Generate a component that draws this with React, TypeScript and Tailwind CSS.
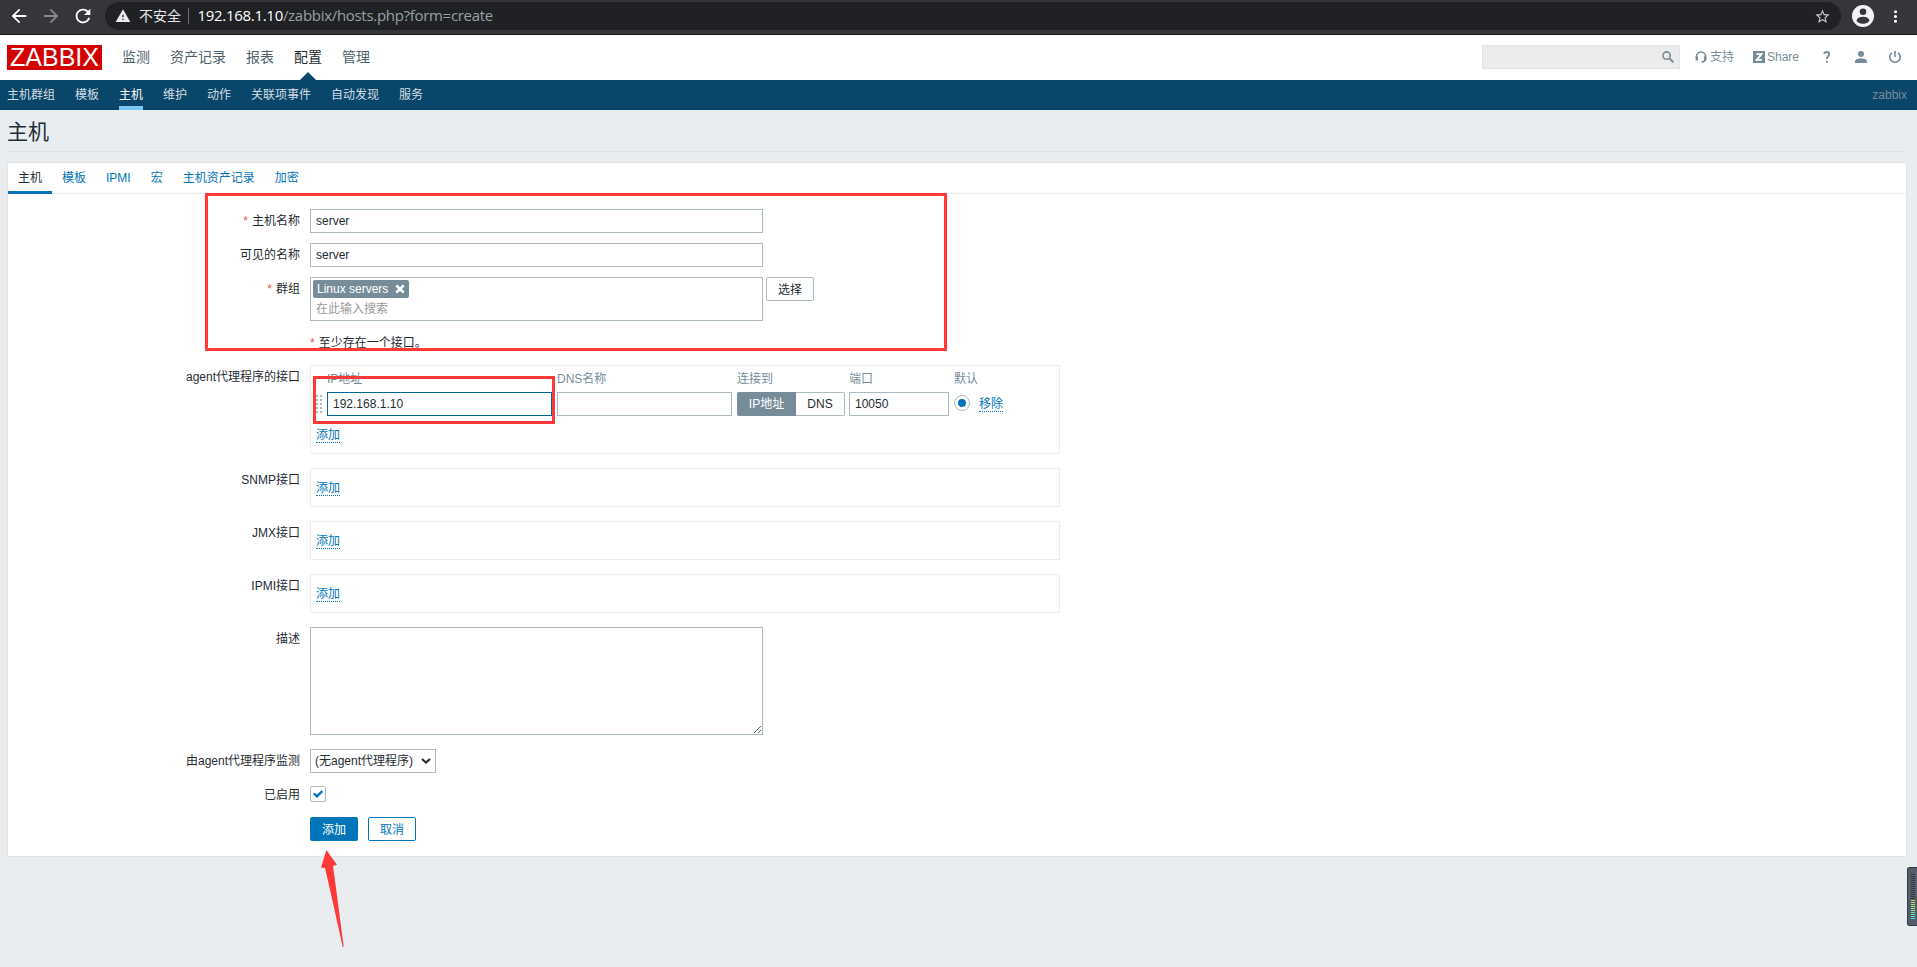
import type { ReactNode } from 'react'
import { MdArrowBack, MdArrowForward, MdMoreVert, MdRefresh, MdStarBorder, MdWarning } from 'react-icons/md'

const menu = ['监测', '资产记录', '报表', '配置', '管理']
const subMenu = ['主机群组', '模板', '主机', '维护', '动作', '关联项事件', '自动发现', '服务']
const tabs = ['主机', '模板', 'IPMI', '宏', '主机资产记录', '加密']
const offBars = Array.from({ length: 13 })
const onBars = ['#c9dc4e', '#bfe05a', '#aee468', '#9de676', '#8ce786', '#7be896', '#6be8a6', '#5be6b4', '#50e4c2', '#49e0cf']

function BrowserBar() {
  return (
    <div className="flex h-[35px] items-start border-b border-[#1b1c1f] bg-[#35363a] pt-0.5 text-white">
      <div className="flex h-7 w-[105px] items-center pl-2">
        <MdArrowBack className="size-[22px]" />
        <MdArrowForward className="ml-2.5 size-[22px] text-[#87888b]" />
        <MdRefresh className="ml-2.5 size-[22px]" />
      </div>
      <div className="flex h-7 w-[1736px] items-center rounded-full bg-[#202124] pr-2.5 pl-2.5">
        <MdWarning className="size-4 text-[#e8eaed]" />
        <span className="ml-2 text-[14px] text-[#e8eaed]">不安全</span>
        <span className="mx-[7px] h-4 w-px bg-[#6b6c6f]" />
        <span className="ml-[1.5px] pb-px font-['Open_Sans',sans-serif] text-[15px] tracking-[-0.3px] text-[#9aa0a6]">
          <span className="text-white">192.168.1.10</span>
          /zabbix/hosts.php?form=create
        </span>
        <MdStarBorder className="ml-auto size-[17px] text-[#c8c9cc]" />
      </div>
      <svg viewBox="0 0 22 22" className="mt-[3px] ml-[11px] size-[22px]">
        <circle cx="11" cy="11" r="11" fill="#f1f3f4" />
        <circle cx="11" cy="6.8" r="3.3" fill="#35363a" />
        <ellipse cx="11" cy="15.3" rx="6.3" ry="3.5" fill="#35363a" />
      </svg>
      <MdMoreVert className="mt-[5px] ml-3 size-[19px]" />
    </div>
  )
}

function Header() {
  return (
    <header className="flex h-[45px] items-center bg-white pr-4 pl-[7px] text-[#768d99]">
      <div className="flex h-[25px] w-[95px] items-center justify-center bg-[#d40000] text-[25px] leading-[25px] text-white">
        ZABBIX
      </div>
      <nav className="ml-5 flex h-full gap-5 text-[14px] leading-[44px] text-[#4f5f6b]">
        {menu.map((item) => (
          <a key={item} className={item === '配置' ? 'relative text-[#1f2c33]' : ''}>
            {item}
            {item === '配置' && (
              <span className="absolute bottom-0 left-1.5 border-x-8 border-b-8 border-x-transparent border-b-[#0a466a]" />
            )}
          </a>
        ))}
      </nav>
      <div className="mb-px ml-auto flex h-6 w-[198px] items-center justify-end border border-[#dfe4e7] bg-[#ebebeb] pr-[5px]">
        <svg viewBox="0 0 12 12" className="size-3" fill="none" stroke="currentColor">
          <circle cx="4.6" cy="4.6" r="3.7" strokeWidth="1.6" />
          <path d="M7.4 7.4l4 4" strokeWidth="2" />
        </svg>
      </div>
      <div className="flex items-center pb-0.5">
        <a className="ml-[15px] flex items-center">
          <svg viewBox="0 0 12 12" className="mr-[3px] size-3" fill="none" stroke="currentColor">
            <path d="M1.500 7V5.500a4.500 4.500 0 0 1 9 0V8Q10.500 10.900 6.500 10.900" strokeWidth="1.600" />
            <path d="M1.800 5.500v4M10.200 5.500v4" strokeWidth="2.400" />
          </svg>
          支持
        </a>
        <a className="ml-[19px] flex items-center">
          <svg viewBox="0 0 12 12" className="mr-0.5 size-3">
            <path d="M0 0h12v12H0z" fill="currentColor" />
            <path d="M3.300 3.200h5.200L3.700 8.900h5.200" fill="none" stroke="#fff" strokeWidth="1.800" />
          </svg>
          Share
        </a>
        <svg viewBox="0 0 8 12" className="ml-6 h-3 w-2" fill="none" stroke="currentColor" strokeWidth="1.800">
          <path d="M1.300 3Q1.400 1 3.800 1T6.200 3.200C6.200 5 3.900 5.200 3.900 8M3.900 9.800v2" />
        </svg>
        <svg viewBox="0 0 12 12" className="ml-6 size-3" fill="currentColor">
          <circle cx="6" cy="3" r="3" />
          <path d="M0 12v-1.700Q0 8 6 7.300q6 .7 6 3V12z" />
        </svg>
        <svg viewBox="0 0 12 12" className="ml-[22px] size-3" fill="none" stroke="currentColor" strokeWidth="1.600">
          <path d="M3 1.800a5.200 5.200 0 1 0 6 0M6 0v6" />
        </svg>
      </div>
    </header>
  )
}

function SubNav() {
  return (
    <nav className="flex h-[30px] gap-5 bg-[#0a466a] pr-2.5 pl-[7px] leading-[31px] text-[#d2dde3]">
      {subMenu.map((item) => (
        <a key={item} className={item === '主机' ? 'h-[30px] border-b-4 border-[#7bc5f5] text-white' : ''}>
          {item}
        </a>
      ))}
      <span className="ml-auto text-[#768d99]">zabbix</span>
    </nav>
  )
}

function Row({ label, required, className = 'h-6', children }: { label?: string; required?: boolean; className?: string; children: ReactNode }) {
  return (
    <div className={`flex items-start gap-2.5 ${className}`}>
      <label className="w-[292px] text-right leading-6">
        {required && <span className="mr-1 text-[#e45959]">*</span>}
        {label}
      </label>
      {children}
    </div>
  )
}

function Link({ children }: { children: ReactNode }) {
  return <a className="block h-[15px] w-6 border-b border-dotted border-[#0275b8] leading-[14px] text-[#0275b8]">{children}</a>
}

function Input({ value, className }: { value?: string; className: string }) {
  return <div className={`h-6 border pl-[5px] leading-[22px] ${className}`}>{value}</div>
}

function AgentInterface() {
  return (
    <div className="h-[89px] w-[750px] border border-[#ebeef0] pl-[5px]">
      <div className="flex h-[21px] pt-1 pl-[11px] leading-[18px] text-[#768d99]">
        <span className="w-[230px]">IP地址</span>
        <span className="w-[180px]">DNS名称</span>
        <span className="w-28">连接到</span>
        <span className="w-[105px]">端口</span>
        <span>默认</span>
      </div>
      <div className="mt-[5px] flex h-6">
        <svg viewBox="0 0 6 18" className="mt-[3px] mr-[5px] h-[18px] w-1.5">
          <path d="M1 0v18M5 0v18" stroke="#acbbc2" strokeWidth="2" strokeDasharray="2 2" />
        </svg>
        <Input value="192.168.1.10" className="w-[225px] border-[#00669e]" />
        <Input className="ml-[5px] w-[175px] border-[#acbbc2]" />
        <div className="ml-[5px] w-[59px] rounded-l-xs bg-[#768d99] text-center leading-6 text-white">IP地址</div>
        <div className="w-[49px] rounded-r-xs border border-l-0 border-[#acbbc2] text-center leading-[22px]">DNS</div>
        <Input value="10050" className="ml-1 w-[100px] border-[#acbbc2]" />
        <span className="mt-[3px] mr-[9px] ml-[5px] flex size-4 items-center justify-center rounded-full border border-[#acbbc2]">
          <span className="size-2 rounded-full bg-[#0275b8]" />
        </span>
        <span className="mt-[5px]">
          <Link>移除</Link>
        </span>
      </div>
      <div className="mt-3">
        <Link>添加</Link>
      </div>
    </div>
  )
}

function EmptyInterface() {
  return (
    <div className="h-[39px] w-[750px] border border-[#ebeef0] pt-3 pl-[5px]">
      <Link>添加</Link>
    </div>
  )
}

function HostForm() {
  return (
    <div className="flex flex-col gap-2.5 pt-[15px]">
      <Row label="主机名称" required>
        <Input value="server" className="w-[453px] border-[#acbbc2]" />
      </Row>
      <Row label="可见的名称">
        <Input value="server" className="w-[453px] border-[#acbbc2]" />
      </Row>
      <Row label="群组" required className="h-11">
        <div className="h-11 w-[453px] border border-[#acbbc2] pt-0.5 pl-0.5">
          <div className="flex h-[18px] w-24 items-center rounded-xs bg-[#768d99] pl-1 text-white">
            Linux servers
            <svg viewBox="0 0 10 10" className="ml-[7px] size-2.5" stroke="#fff" strokeWidth="2.600">
              <path d="M1.300 1.300l7.400 7.400M8.700 1.300L1.300 8.700" />
            </svg>
          </div>
          <div className="pl-[3px] leading-[23px] text-[#9a9a9a]">在此输入搜索</div>
        </div>
        <button className="-ml-[7px] h-6 w-12 rounded-xs border border-[#acbbc2] pt-px">选择</button>
      </Row>
      <Row>
        <div className="leading-6">
          <span className="mr-1 text-[#e45959]">*</span>至少存在一个接口。
        </div>
      </Row>
      <Row label="agent代理程序的接口" className="h-[93px]">
        <AgentInterface />
      </Row>
      <Row label="SNMP接口" className="h-[43px]">
        <EmptyInterface />
      </Row>
      <Row label="JMX接口" className="h-[43px]">
        <EmptyInterface />
      </Row>
      <Row label="IPMI接口" className="h-[43px]">
        <EmptyInterface />
      </Row>
      <Row label="描述" className="h-28">
        <textarea className="h-[108px] w-[453px] resize border border-[#acbbc2]" />
      </Row>
      <Row label="由agent代理程序监测">
        <div className="flex h-6 w-[126px] items-center border border-[#acbbc2] pl-1">
          (无agent代理程序)
          <svg viewBox="0 0 10 6" className="ml-auto mr-1 h-1.5 w-2.5" fill="none" stroke="#1f2c33" strokeWidth="2">
            <path d="M1 1l4 3.600L9 1" />
          </svg>
        </div>
      </Row>
      <Row label="已启用">
        <span className="mt-[3px] flex size-4 items-center justify-center rounded-xs border border-[#acbbc2]">
          <svg viewBox="0 0 10 8" className="h-2 w-2.5" fill="none" stroke="#0275b8" strokeWidth="2.400">
            <path d="M.8 3.400L4 6.300 9.300 1.100" />
          </svg>
        </span>
      </Row>
      <Row>
        <button className="h-6 w-12 rounded-xs bg-[#0275b8] pt-0.5 text-white">添加</button>
        <button className="h-6 w-12 rounded-xs border border-[#0275b8] pt-0.5 text-[#0275b8]">取消</button>
      </Row>
    </div>
  )
}

function LevelWidget() {
  return (
    <div className="absolute top-[867px] right-0 flex h-[59px] w-2.5 flex-col gap-px rounded-l-[3px] border border-r-0 border-[#353b47] bg-[#555c6c] pt-1.5 pl-[3px]">
      {offBars.map((_, i) => (
        <span key={i} className="h-px w-1 shrink-0 bg-[#343943]" />
      ))}
      {onBars.map((color) => (
        <span key={color} className="h-px w-1 shrink-0" style={{ backgroundColor: color }} />
      ))}
    </div>
  )
}

export default function App() {
  return (
    <div className="relative h-[967px] w-[1917px] overflow-hidden bg-[#e9edf0] font-['Liberation_Sans','Noto_Sans_CJK_SC',sans-serif] text-[12px] text-[#1f2c33]">
      <BrowserBar />
      <Header />
      <SubNav />
      <main className="pr-[11px] pl-[7px]">
        <h1 className="h-[42px] border-b border-[#dfe4e7] text-[21px] leading-[43px]">主机</h1>
        <section className="mt-2.5 h-[695px] w-[1900px] border border-[#dfe4e7] bg-white">
          <div className="flex h-[31px] border-b border-[#ebeef0] text-[#0275b8]">
            {tabs.map((tab, i) => (
              <a key={tab} className={i === 0 ? 'h-[31px] border-b-3 border-[#0275b8] px-2.5 leading-[30px] text-[#1f2c33]' : 'px-2.5 leading-[30px]'}>
                {tab}
              </a>
            ))}
          </div>
          <HostForm />
        </section>
      </main>
      {/* annotations */}
      <div className="absolute top-[193px] left-[205px] h-[158px] w-[742px] border-3 border-[#ff3838]" />
      <div className="absolute top-[376px] left-[313px] h-12 w-[242px] border-3 border-[#ff3838]" />
      <svg viewBox="0 0 24 98" className="absolute top-[850px] left-[320px] h-[98px] w-6">
        <path d="M6.300 0L17 14.700l-4 1.300L16.800 44 23.700 97h-1L13 53 5 17.700H1z" fill="#ff3838" />
      </svg>
      <LevelWidget />
    </div>
  )
}
